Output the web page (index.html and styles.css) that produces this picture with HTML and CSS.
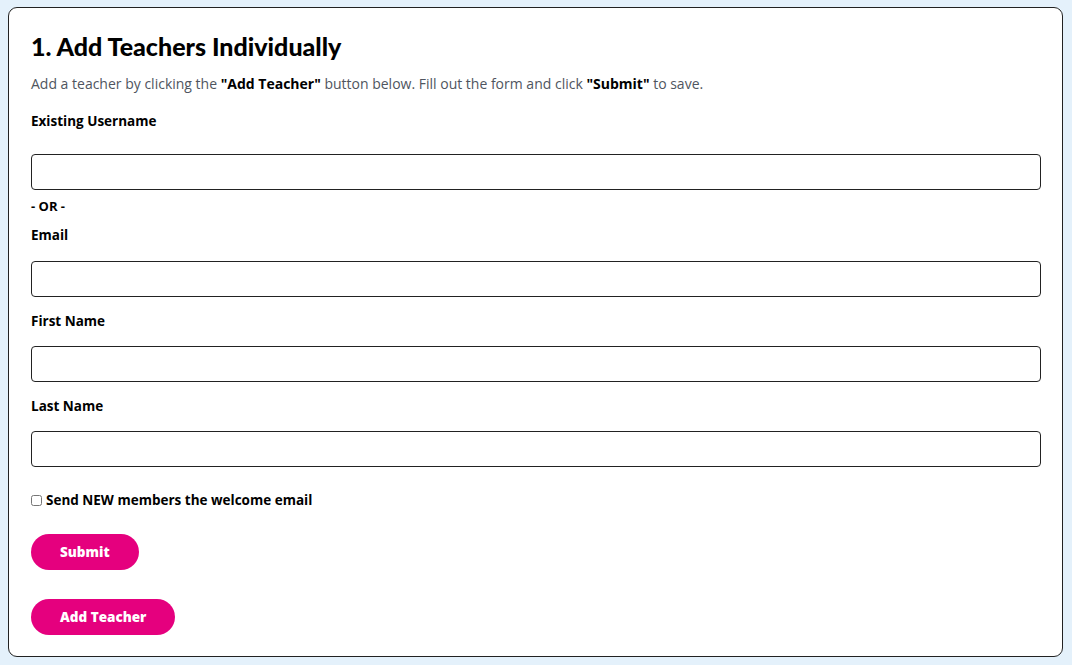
FILE: index.html
```html
<!DOCTYPE html>
<html>
<head>
    <meta charset="utf-8"/>
    <link rel="stylesheet" href="styles.css">
</head>
<body>
<div class="card">
    <h2 class="title">1. Add Teachers Individually</h2>
    <p class="intro">Add a teacher by clicking the <b>"Add Teacher"</b> button below. Fill out the form and click <b>"Submit"</b> to save.</p>

    <div class="field first">
        <label>Existing Username</label>
        <input type="text">
    </div>
    <div class="or">- OR -</div>
    <div class="field after-or">
        <label>Email</label>
        <input type="text">
    </div>
    <div class="field">
        <label>First Name</label>
        <input type="text">
    </div>
    <div class="field">
        <label>Last Name</label>
        <input type="text">
    </div>

    <label class="check"><input type="checkbox"> Send NEW members the welcome email</label>

    <div class="actions">
        <button class="btn">Submit</button>
        <button class="btn">Add Teacher</button>
    </div>
</div>
</body>
</html>
```

FILE: styles.css
```css
body {
    margin: 0;
    padding: 7px 9px 7px 8px;
    background: #e4f1fb;
    font-family: 'Open Sans', 'Lato', sans-serif;
}

.card {
    background: #fff;
    border: 1px solid #222;
    border-radius: 9px;
    padding: 22px 21px 21px 22px;
}

.card .title {
    margin: 0;
    font-family: 'Lato', sans-serif;
    font-size: 25px;
    line-height: 32px;
    font-weight: 900;
    color: #000;
}

.card .intro {
    margin: 12px 0 0 0;
    font-size: 14px;
    line-height: 20px;
    color: #4f5560;
}

.card .intro b {
    color: #000;
}

.card .field {
    display: flex;
    flex-direction: column;
    margin-top: 14px;
}

.card .field.first {
    margin-top: 17px;
}

.card .field.after-or {
    margin-top: 9px;
}

.card .field label {
    font-size: 13.5px;
    line-height: 20px;
    font-weight: bold;
    color: #000;
    margin-bottom: 15px;
}

.card .field.first label {
    margin-bottom: 23px;
}

.card .field.after-or label {
    margin-bottom: 16px;
}

.card .field input {
    height: 36px;
    box-sizing: border-box;
    border: 1px solid #222;
    border-radius: 4px;
    font-size: 14px;
    padding: 0 10px;
}

.card .or {
    margin-top: 6px;
    font-size: 13px;
    line-height: 20px;
    font-weight: bold;
}

.card .check {
    display: flex;
    align-items: center;
    margin-top: 23px;
    font-size: 13.5px;
    line-height: 20px;
    font-weight: bold;
}

.card .check input {
    margin: 0 4px 0 0;
    width: 11px;
    height: 11px;
}

.card .actions {
    display: flex;
    flex-direction: column;
    align-items: flex-start;
    gap: 29px;
    margin-top: 24px;
}

.card .btn {
    height: 36px;
    padding: 0 29px;
    border: none;
    border-radius: 18px;
    background: #e5007e;
    color: #fff;
    font-family: inherit;
    font-size: 13.5px;
    font-weight: 800;
}
```
